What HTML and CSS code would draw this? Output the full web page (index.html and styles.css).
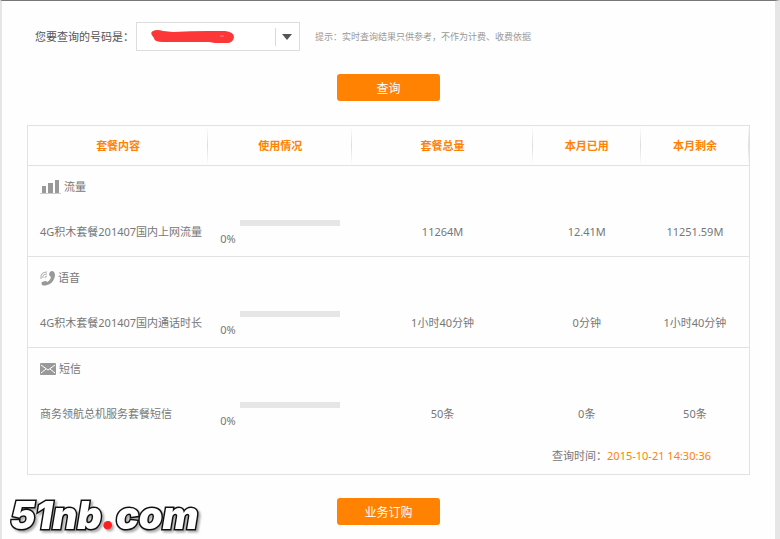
FILE: index.html
```html
<!DOCTYPE html>
<html lang="zh-CN">

<head>
    <meta charset="UTF-8">
    <title>套餐使用情况查询</title>
    <link rel="stylesheet" href="styles.css">
</head>

<body>
    <main class="page">
        <form class="query">
            <div class="query-row">
                <label for="number">您要查询的号码是：</label>
                <div class="select-box">
                    <select id="number">
                        <option value=""></option>
                    </select>
                    <svg class="mask" width="84" height="14" viewBox="0 0 84 14">
                        <path d="M2 1Q6 -1 12 1L22 2Q40 1 58 1L74 1Q83 2 83 7Q82 13 76 13L64 13L58 12L12 12Q3 12 3 8Q-2 3 2 1Z" fill="#fb3737" />
                        <path d="M69 6h4" stroke="#fd8080" />
                    </svg>
                    <svg class="arrow" width="18" height="18" viewBox="0 0 18 18">
                        <path d="M.5 0v18" stroke="#d9d9d9" />
                        <path d="M7 6h10l-5 6z" fill="#555" />
                    </svg>
                </div>
                <p class="hint">提示：实时查询结果只供参考，不作为计费、收费依据</p>
            </div>
            <button type="button" class="btn">查询</button>
        </form>

        <table class="usage">
            <thead>
                <tr>
                    <th class="wide">套餐内容</th>
                    <th class="bar-col">使用情况</th>
                    <th class="wide">套餐总量</th>
                    <th>本月已用</th>
                    <th>本月剩余</th>
                </tr>
            </thead>
            <tbody>
                <tr class="type">
                    <td colspan="5">
                        <div class="type-name">
                            <svg width="21" height="14" viewBox="0 0 21 14" fill="#999">
                                <path d="M2 6h4v7H2zM8 3h5v10H8zM15 0h4v13h-4z" />
                                <path d="M0 13h21v1H0z" fill="#ccc" />
                            </svg>
                            <span>流量</span>
                        </div>
                    </td>
                </tr>
                <tr class="item">
                    <td class="name">4G积木套餐201407国内上网流量</td>
                    <td class="usage-cell">
                        <div class="usage-bar"><span class="percent">0%</span><span class="track"></span></div>
                    </td>
                    <td>11264M</td>
                    <td>12.41M</td>
                    <td>11251.59M</td>
                </tr>
            </tbody>
            <tbody>
                <tr class="type">
                    <td colspan="5">
                        <div class="type-name">
                            <svg width="15" height="15" viewBox="0 0 15 15">
                                <path d="M10 1Q12 -1 14 1Q16 4 14 8Q12 13 7 14Q4 15 2 14Q1 12 2 11L5 10Q7 10 7 11Q10 10 11 6Q9 5 9 3Z" fill="#999" />
                                <path d="M1 8Q0 1 7 1M3 7Q2 3 7 3M5 7Q5 5 7 5" fill="none" stroke="#aaa" />
                            </svg>
                            <span>语音</span>
                        </div>
                    </td>
                </tr>
                <tr class="item">
                    <td class="name">4G积木套餐201407国内通话时长</td>
                    <td class="usage-cell">
                        <div class="usage-bar"><span class="percent">0%</span><span class="track"></span></div>
                    </td>
                    <td>1小时40分钟</td>
                    <td>0分钟</td>
                    <td>1小时40分钟</td>
                </tr>
            </tbody>
            <tbody>
                <tr class="type">
                    <td colspan="5">
                        <div class="type-name">
                            <svg width="16" height="12" viewBox="0 0 16 12">
                                <rect width="16" height="12" rx="1" fill="#999" />
                                <path d="M1 2l7 5 7-5M1 10l5-4M15 10l-5-4" fill="none" stroke="#fff" />
                            </svg>
                            <span>短信</span>
                        </div>
                    </td>
                </tr>
                <tr class="item">
                    <td class="name">商务领航总机服务套餐短信</td>
                    <td class="usage-cell">
                        <div class="usage-bar"><span class="percent">0%</span><span class="track"></span></div>
                    </td>
                    <td>50条</td>
                    <td>0条</td>
                    <td>50条</td>
                </tr>
            </tbody>
            <tfoot>
                <tr>
                    <td colspan="5">查询时间：<time>2015-10-21 14:30:36</time></td>
                </tr>
            </tfoot>
        </table>

        <button type="button" class="btn">业务订购</button>
        <div class="watermark">51nb<span>.</span>com</div>
    </main>
</body>

</html>
```

FILE: styles.css
```css
* {
    box-sizing: border-box;
}

body {
    margin: 0;
    font-family: "Noto Sans", "Noto Sans CJK SC", sans-serif;
    font-size: 11px;
    line-height: 16px;
    color: #777;
    background: #fefefe;
}

.page {
    position: relative;
    min-height: 100vh;
    padding: 21px 25px 14px;
    border-top: 1px solid #777;
    border-left: 2px solid #e5e5e5;
    border-right: 5px solid #e6e6e6;
}

.query-row {
    display: flex;
    align-items: center;
    padding-left: 8px;
}

.query-row label {
    width: 101px;
    white-space: nowrap;
    color: #555;
}

.select-box {
    position: relative;
    width: 164px;
}

.select-box select {
    display: block;
    width: 100%;
    height: 29px;
    border: 1px solid #ddd;
    border-radius: 0;
    background: #fff;
    appearance: none;
}

.mask,
.arrow {
    position: absolute;
    pointer-events: none;
}

.mask {
    top: 8px;
    left: 15px;
}

.arrow {
    top: 6px;
    right: 7px;
}

.hint {
    margin: 0 0 0 15px;
    font-size: 9px;
    color: #999;
}

.btn {
    display: block;
    width: 103px;
    height: 27px;
    margin: 23px auto 0;
    padding: 0;
    border: 0;
    border-radius: 3px;
    font-family: inherit;
    font-size: 12px;
    color: #fff;
    background: #ff8203;
}

.usage {
    width: 100%;
    margin-top: 24px;
    table-layout: fixed;
    border: 1px solid #e2e2e2;
    border-spacing: 0;
    text-align: center;
}

.usage th,
.usage td {
    padding: 0;
}

.usage th {
    width: 15%;
    height: 40px;
    border-bottom: 1px solid #e2e2e2;
    color: #ff8203;
    background: linear-gradient(#fefefe, #ddd, #fefefe) right / 1px 100% no-repeat;
}

.usage th.wide {
    width: 25%;
}

.usage th.bar-col {
    width: 20%;
}

.usage .type td {
    height: 42px;
    padding-left: 12px;
}

.type-name {
    display: flex;
    align-items: center;
    gap: 3px;
}

.usage .item td {
    height: 49px;
    border-bottom: 1px solid #e2e2e2;
}

.usage tbody:last-of-type .item td {
    height: 48px;
    border-bottom: 0;
}

.usage .item .name {
    padding-left: 12px;
    text-align: left;
    white-space: nowrap;
}

.usage .item .usage-cell {
    padding: 12px 12px 0;
    vertical-align: top;
}

.usage-bar {
    display: flex;
    gap: 4px;
}

.percent {
    padding-top: 11px;
}

.track {
    width: 101px;
    height: 6px;
    background: #e6e6e6;
}

.usage tfoot td {
    height: 36px;
    padding-right: 38px;
    text-align: right;
}

.usage time {
    color: #ff8203;
}

.watermark {
    position: absolute;
    left: 8px;
    bottom: 4px;
    font: italic 900 38px/40px Inter, sans-serif;
    color: #fff;
    -webkit-text-stroke: 3px #111;
    paint-order: stroke fill;
    filter: drop-shadow(2px 2px 1px #aaa);
}

.watermark span {
    color: #fb2020;
    -webkit-text-stroke: 1px #fb2020;
}
```
